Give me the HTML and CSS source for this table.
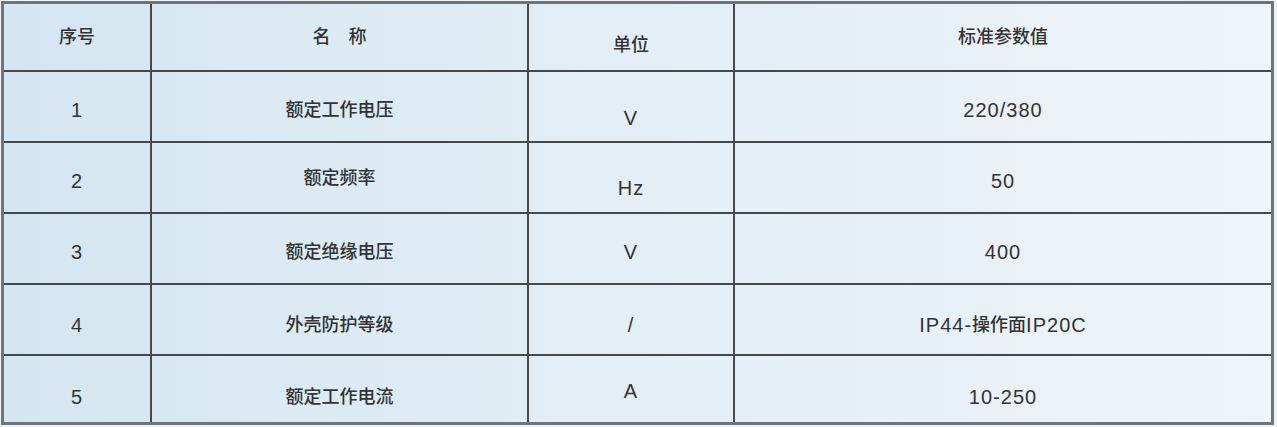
FILE: index.html
```html
<!DOCTYPE html>
<html lang="zh">
<head>
<meta charset="utf-8">
<title>参数表</title>
<link rel="stylesheet" href="styles.css">
</head>
<body>
<div class="spec">
  <div class="row head">
    <div class="cell"><span class="zh">序号</span></div>
    <div class="cell"><span class="zh">名　称</span></div>
    <div class="cell p16"><span class="zh">单位</span></div>
    <div class="cell"><span class="zh">标准参数值</span></div>
  </div>
  <div class="row r1">
    <div class="cell">1</div>
    <div class="cell"><span class="zh">额定工作电压</span></div>
    <div class="cell p23">V</div>
    <div class="cell">220/380</div>
  </div>
  <div class="row r2">
    <div class="cell">2</div>
    <div class="cell p1"><span class="zh">额定频率</span></div>
    <div class="cell p21">Hz</div>
    <div class="cell">50</div>
  </div>
  <div class="row r3">
    <div class="cell">3</div>
    <div class="cell"><span class="zh">额定绝缘电压</span></div>
    <div class="cell">V</div>
    <div class="cell">400</div>
  </div>
  <div class="row r4">
    <div class="cell">4</div>
    <div class="cell"><span class="zh">外壳防护等级</span></div>
    <div class="cell">/</div>
    <div class="cell">IP44-<span class="zh">操作面</span>IP20C</div>
  </div>
  <div class="row r5">
    <div class="cell">5</div>
    <div class="cell"><span class="zh">额定工作电流</span></div>
    <div class="cell p4">A</div>
    <div class="cell">10-250</div>
  </div>
</div>
</body>
</html>
```
FILE: styles.css
```css
html, body {
  margin: 0;
  padding: 0;
  background: #eef3f7;
}
body {
  padding: 1px 0 0 1px;
}
.spec {
  box-sizing: border-box;
  width: 1273px;
  height: 424px;
  border: 3px solid #6e7479;
  background: linear-gradient(to right, #d4e6f2 0%, #e2edf5 45%, #eef4f9 100%);
  font-family: "Liberation Sans", "Noto Sans CJK SC", sans-serif;
  font-size: 20px;
  letter-spacing: 1px;
  color: #333;
  display: flex;
  flex-direction: column;
}
.row {
  box-sizing: border-box;
  display: grid;
  grid-template-columns: 146px 377px 206px 1fr;
  border-top: 2px solid #46494c;
}
.row.head { border-top: none; height: 66px; }
.row.r1, .row.r2, .row.r3, .row.r4 { height: 71px; }
.row.r5 { height: 68px; }

.cell {
  box-sizing: border-box;
  display: flex;
  align-items: center;
  justify-content: center;
  border-left: 2px solid #46494c;
  line-height: 22px;
  white-space: nowrap;
}
.cell:first-child { border-left: none; }

.zh {
  font-size: 18px;
  letter-spacing: 0;
  font-weight: 500;
}

.r1 .cell { padding-top: 6px; }
.r2 .cell { padding-top: 7px; }
.r3 .cell { padding-top: 7px; }
.r4 .cell { padding-top: 11px; }
.r5 .cell { padding-top: 16px; }

.row .cell.p16 { padding-top: 16px; }
.row .cell.p23 { padding-top: 23px; }
.row .cell.p21 { padding-top: 21px; }
.row .cell.p1 { padding-top: 1px; }
.row .cell.p4 { padding-top: 4px; }
```
